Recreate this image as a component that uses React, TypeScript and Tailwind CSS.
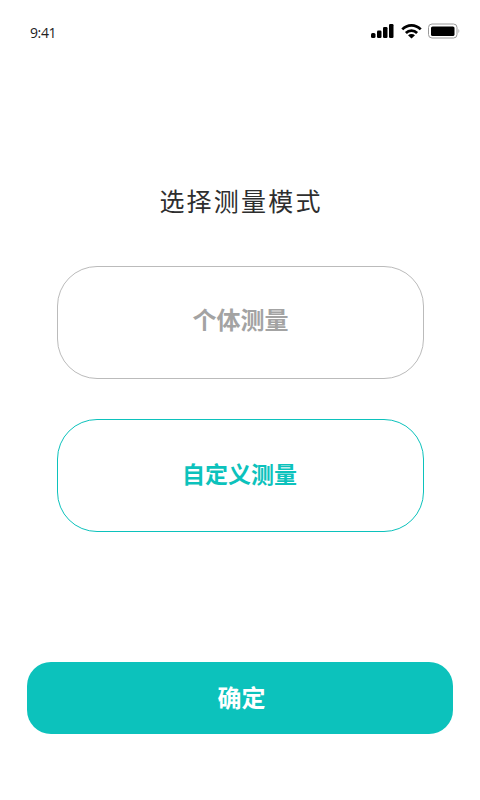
export default function App() {
  return (
    <div className="w-[480px] h-[800px] bg-white flex flex-col font-['Noto_Sans','Noto_Sans_CJK_SC',sans-serif]">
      <div className="h-[66px] pl-[30px] pr-[20px] pt-[24px] flex items-start justify-between">
        <span className="text-[14px] leading-[18px] text-[#222] font-['Open_Sans',sans-serif] tracking-[-0.4px]">9:41</span>
        <div className="flex items-center -mt-[1px]">
          <svg className="mr-[7px]" width="23" height="16" viewBox="0 0 23 16" fill="#000">
            <rect x="0" y="10" width="4.5" height="5" rx="1.5" />
            <rect x="6" y="7.5" width="4.5" height="7.5" rx="1.2" />
            <rect x="12" y="4" width="4.5" height="11" rx="1.2" />
            <rect x="18" y="1" width="4.5" height="14" rx="1.2" />
          </svg>
          <svg className="mr-[6px]" width="21" height="16" viewBox="0 0 21 16" fill="none" stroke="#000" strokeWidth="2.7">
            <path d="M1.3 6.4 C6.4 0.9 14.6 0.9 19.7 6.4" />
            <path d="M4.9 10 C8 6.8 13 6.8 16.1 10" />
            <path d="M10.5 15.6 L7 12.2 C9 10.6 12 10.6 14 12.2 Z" fill="#000" stroke="none" />
          </svg>
          <svg width="32" height="16" viewBox="0 0 32 16" fill="none">
            <rect x="0.5" y="1" width="28.5" height="14" rx="3.5" stroke="#9a9a9a" />
            <rect x="3" y="3.5" width="23.5" height="9.5" rx="1.6" fill="#000" />
            <path d="M30.5 6 C31.5 6.4 31.5 9.6 30.5 10 Z" fill="#9a9a9a" />
          </svg>
        </div>
      </div>
      <h1 className="mt-[117px] pl-[2px] text-center text-[25px] leading-[36px] font-normal tracking-[2.2px] text-[#2e2e2e]">选择测量模式</h1>
      <div className="mt-[47px] flex flex-col gap-[40px] px-[57px] w-[481px]">
        <button className="h-[113px] rounded-[40px] border border-[#bbbbbb] pb-[5px] flex items-center justify-center text-[24px] font-bold text-[#a3a3a3]">个体测量</button>
        <button className="h-[113px] rounded-[40px] border border-[#0cc2bc] pb-[3px] pr-[2px] flex items-center justify-center text-[23px] font-bold text-[#0cc2bc]">自定义测量</button>
      </div>
      <div className="mt-[130px] px-[27px]">
        <button className="w-full h-[72px] rounded-[24px] bg-[#0cc2bc] pl-[3px] text-white text-[24px] font-bold flex items-center justify-center">确定</button>
      </div>
    </div>
  );
}
